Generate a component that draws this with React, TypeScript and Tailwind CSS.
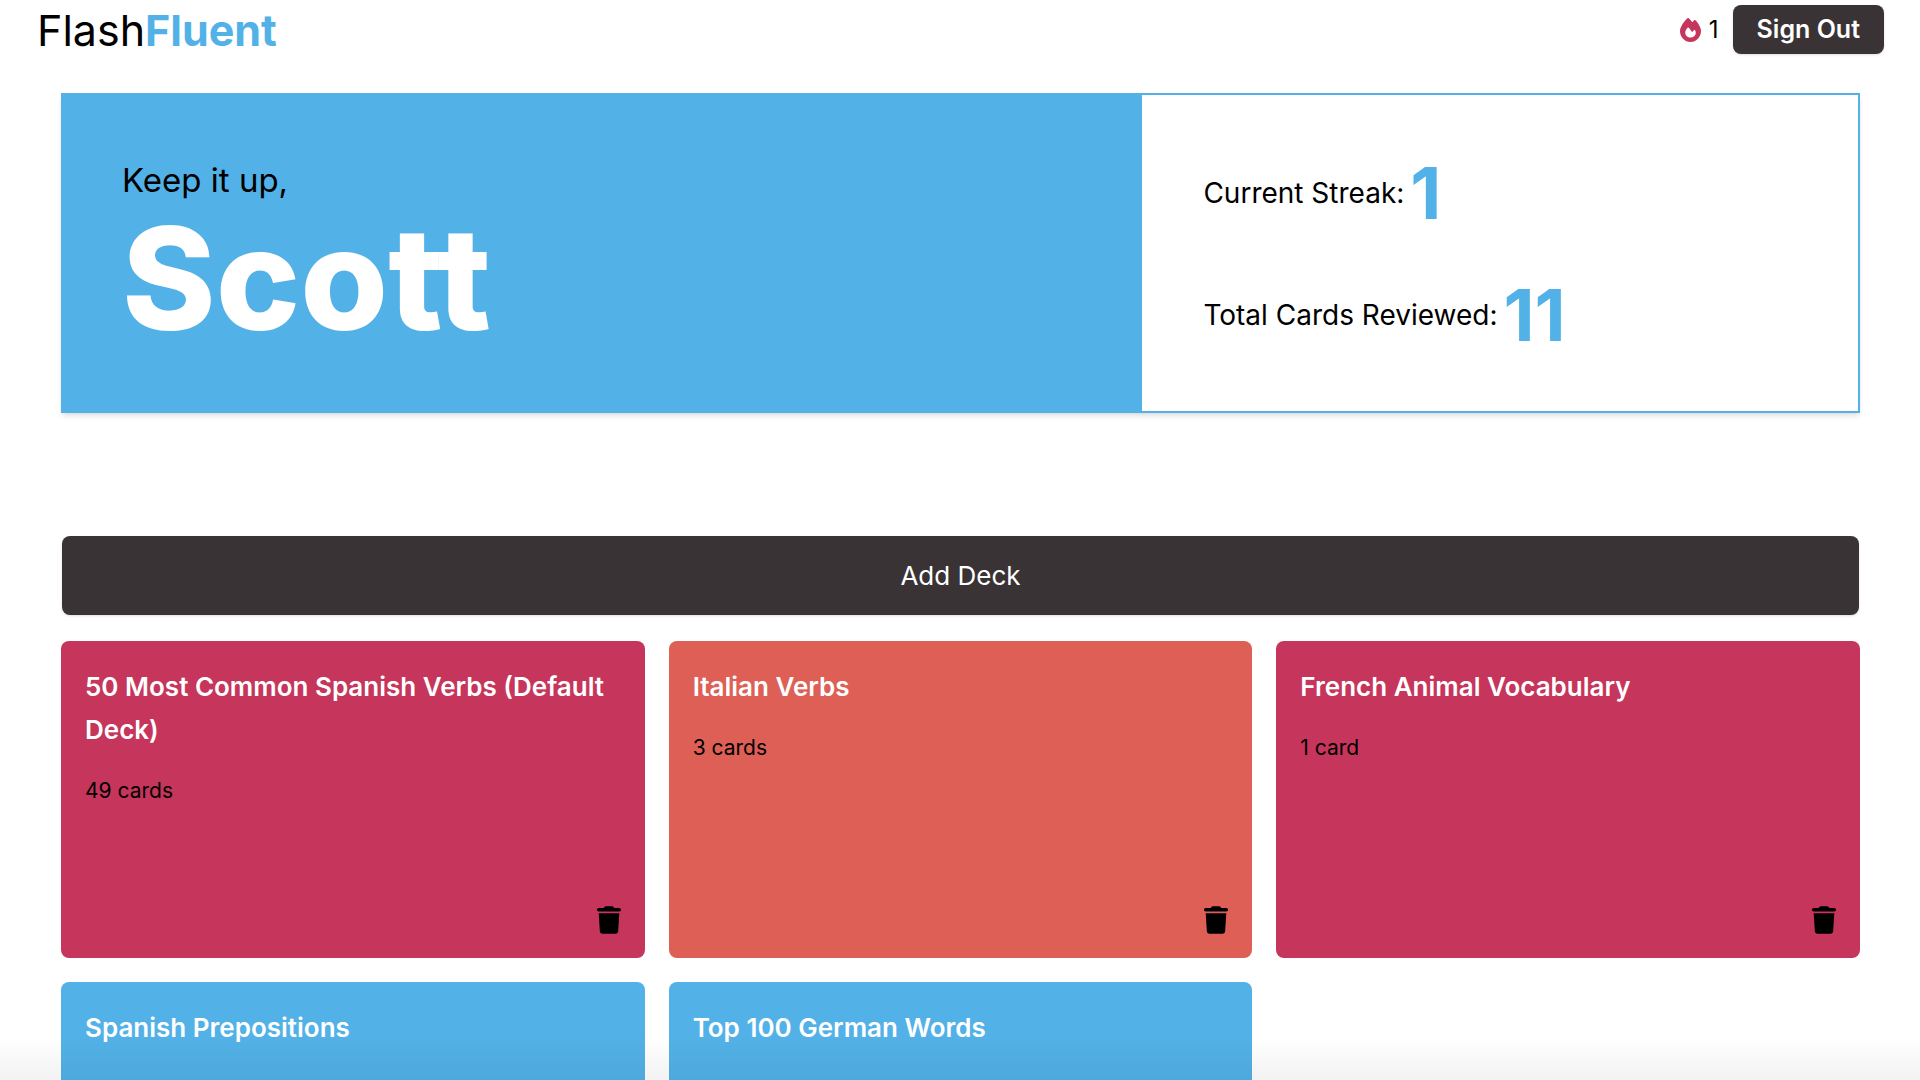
import { FaFire, FaTrash } from "react-icons/fa6";

type Deck = { title: string; count?: string; tone: string };

const decks: Deck[] = [
  { title: "50 Most Common Spanish Verbs (Default Deck)", count: "49 cards", tone: "bg-[#c6355b]" },
  { title: "Italian Verbs", count: "3 cards", tone: "bg-[#de5f55]" },
  { title: "French Animal Vocabulary", count: "1 card", tone: "bg-[#c6355b]" },
  { title: "Spanish Prepositions", tone: "bg-[#52b1e7]" },
  { title: "Top 100 German Words", tone: "bg-[#52b1e7]" },
];

function Header() {
  return (
    <header className="flex items-start justify-between pt-[5px] pr-9 pl-[37px]">
      <a href="#" className="text-[43px] leading-[50px]">
        Flash<span className="font-bold text-[#52b1e7]">Fluent</span>
      </a>
      <div className="flex items-center">
        <FaFire className="h-6 w-[21px] text-[#c6355b]" aria-label="Streak" />
        <span className="mr-3.5 ml-2 text-2xl">1</span>
        <button className="h-[49px] rounded-lg bg-[#3a3335] px-6 text-[25px] font-semibold text-white shadow-sm">
          Sign Out
        </button>
      </div>
    </header>
  );
}

function Stat({ label, value }: { label: string; value: string }) {
  return (
    <p className="flex items-center gap-1.5 text-[28px] leading-[72px]">
      {label} <span className="text-[72px] font-bold text-[#52b1e7]">{value}</span>
    </p>
  );
}

function Hero() {
  return (
    <section className="mt-[38px] flex shadow-md">
      <div className="w-3/5 bg-[#52b1e7] px-[61px] pt-[63px] pb-16">
        <p className="text-[33px] leading-[48px]">Keep it up,</p>
        <h1 className="mt-1 text-[142px] leading-[141px] font-extrabold text-white">Scott</h1>
      </div>
      <div className="flex w-2/5 flex-col justify-center gap-[50px] border-2 border-[#52b1e7] px-[61px] pt-[2px]">
        <Stat label="Current Streak:" value="1" />
        <Stat label="Total Cards Reviewed:" value="11" />
      </div>
    </section>
  );
}

function DeckCard({ deck }: { deck: Deck }) {
  return (
    <article className={`flex h-[317px] flex-col rounded-lg p-6 ${deck.tone}`}>
      <h2 className="text-[26px] leading-[43px] font-semibold text-white">{deck.title}</h2>
      {deck.count && <p className="mt-6 text-[21px] leading-[32px]">{deck.count}</p>}
      <button aria-label={`Delete ${deck.title}`} className="mt-auto self-end">
        <FaTrash className="h-7 w-6" />
      </button>
    </article>
  );
}

export default function App() {
  return (
    <div className="relative h-screen overflow-hidden bg-white font-['Inter',sans-serif] text-black">
      <Header />
      <main className="pr-[60px] pl-[61px]">
        <Hero />
        <div className="mt-[123px] px-px">
          <button className="h-[79px] w-full rounded-lg bg-[#3a3335] text-[26px] text-white shadow-sm">
            Add Deck
          </button>
        </div>
        <div className="mt-[26px] grid grid-cols-3 gap-6">
          {decks.map((deck) => (
            <DeckCard key={deck.title} deck={deck} />
          ))}
        </div>
      </main>
      <div className="pointer-events-none absolute inset-x-0 bottom-0 h-11 bg-linear-to-t from-black/5 to-transparent" />
    </div>
  );
}
